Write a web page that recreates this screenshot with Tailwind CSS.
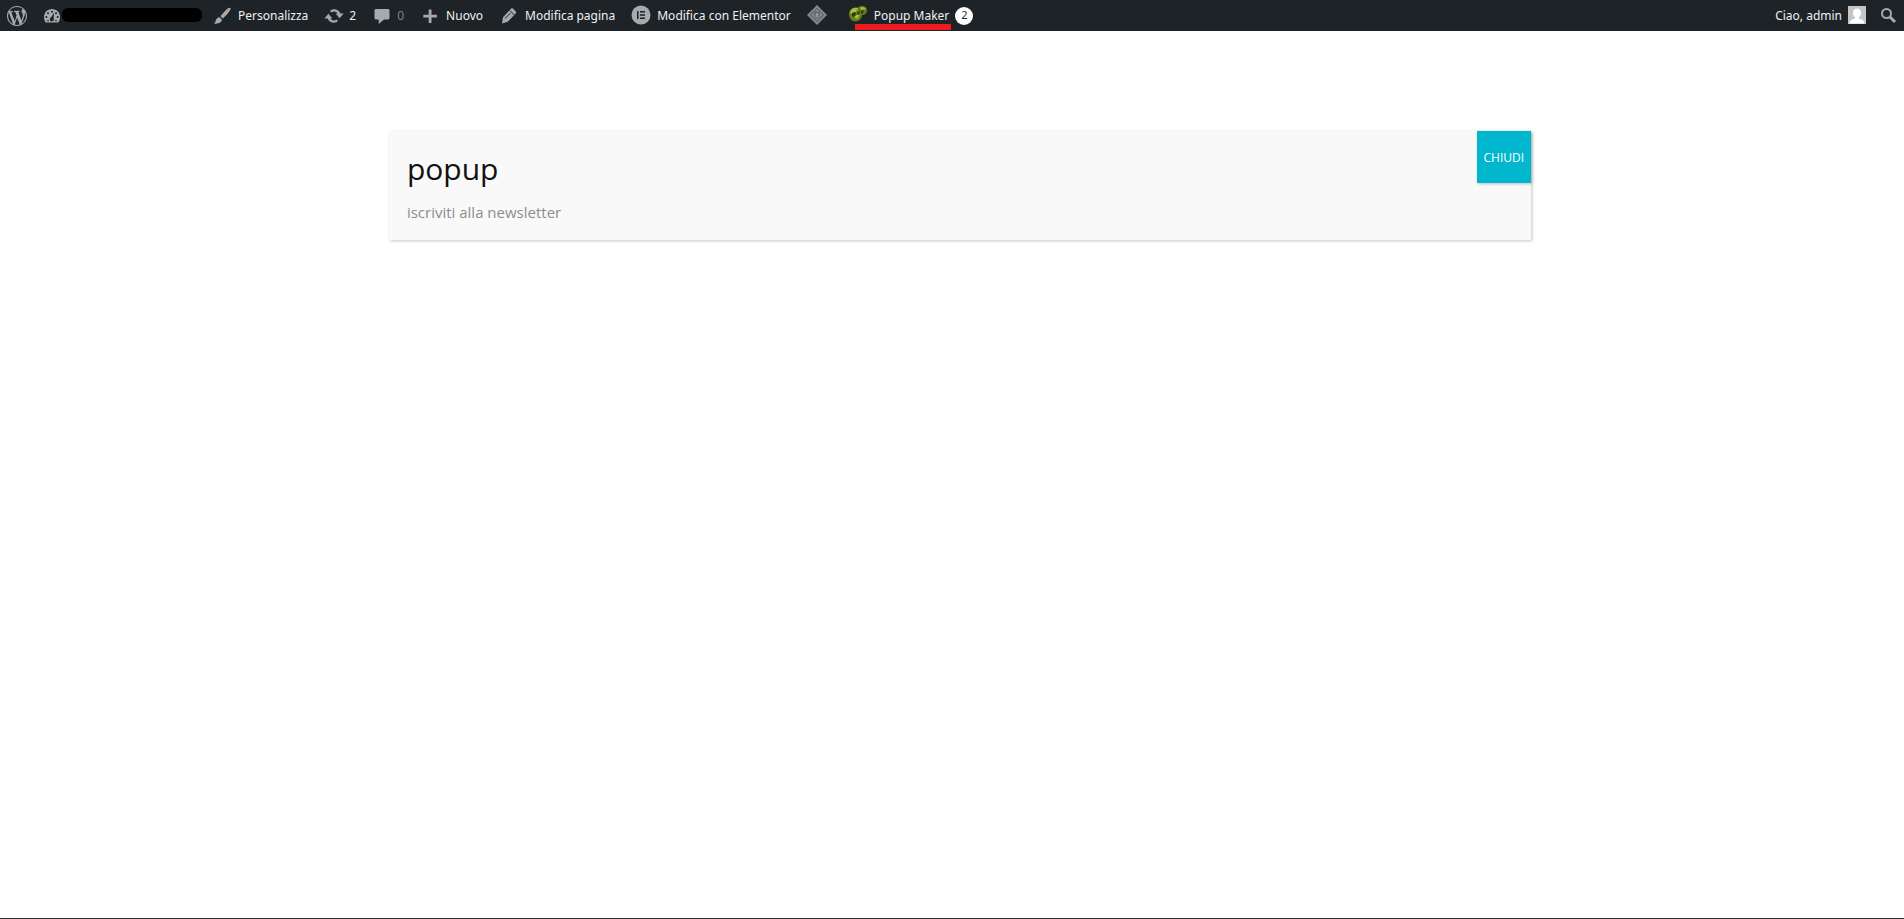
<!DOCTYPE html>
<html lang="it">
<head>
  <meta charset="UTF-8" />
  <meta name="viewport" content="width=device-width, initial-scale=1.0"/>
  <title>popup</title>
  <script src="https://cdn.jsdelivr.net/npm/@tailwindcss/browser@4"></script>
</head>
<body class="bg-white min-h-screen flex flex-col font-['Open_Sans','Noto_Sans',sans-serif]">
  <!-- Admin bar -->
  <nav class="h-[31px] bg-[#1d2327] text-[#f0f0f1] text-xs font-['Noto_Sans','Open_Sans',sans-serif] flex items-center justify-between whitespace-nowrap">
    <div class="h-full flex items-center">
      <a href="#" aria-label="WordPress" class="flex items-center px-[7px]">
        <svg class="w-5 h-5 fill-[#a7aaad]" viewBox="0 0 20 20"><path d="M20 10c0-5.51-4.49-10-10-10C4.48 0 0 4.49 0 10c0 5.52 4.48 10 10 10 5.51 0 10-4.48 10-10zM7.78 15.37L4.37 6.22c.55-.02 1.17-.08 1.17-.08.5-.06.44-1.13-.06-1.11 0 0-1.45.11-2.37.11-.18 0-.37 0-.58-.01C4.12 2.69 6.87 1.11 10 1.11c2.33 0 4.45.87 6.05 2.34-.68-.11-1.65.39-1.65 1.58 0 .74.45 1.36.9 2.1.35.61.55 1.36.55 2.46 0 1.49-1.4 5-1.4 5l-3.03-8.37c.54-.02.82-.17.82-.17.5-.05.44-1.25-.06-1.22 0 0-1.44.12-2.38.12-.87 0-2.33-.12-2.33-.12-.5-.03-.56 1.2-.06 1.22l.92.08 1.26 3.41zM17.41 10c.24-.64.74-1.87.43-4.25.7 1.29 1.05 2.71 1.05 4.25 0 3.29-1.73 6.24-4.4 7.78.97-2.59 1.94-5.2 2.92-7.78zM6.1 18.09C3.12 16.65 1.11 13.53 1.11 10c0-1.3.23-2.48.72-3.59C3.25 10.3 4.67 14.2 6.1 18.09zm4.03-6.63l2.58 6.98c-.86.29-1.76.45-2.71.45-.79 0-1.57-.11-2.29-.33.81-2.38 1.62-4.74 2.42-7.1z"/></svg>
      </a>
      <a href="#" aria-label="Sito" class="flex items-center pl-2 pr-[2px]">
        <svg class="w-5 h-5" viewBox="0 0 20 20">
          <path class="fill-[#a7aaad]" d="M3.8 16.5h12.4C17.500 15 18 13 18 11c0-4.400-3.600-8-8-8s-8 3.600-8 8c0 2 .5 4 1.800 5.500z"/>
          <g class="fill-[#1d2327]"><circle cx="10" cy="5.700" r="1"/><circle cx="6" cy="7.300" r="1"/><circle cx="14" cy="7.300" r="1"/><circle cx="4.400" cy="11" r="1"/><circle cx="15.600" cy="11" r="1"/><path d="M12.200 6.800l-.6 5.200a2.100 2.100 0 1 1-2.500-.7z"/><path d="M5 14.200h2v1H5zM13 14.200h2v1h-2z"/></g>
        </svg>
        <span class="w-[140px] h-[14px] -mt-px rounded-md bg-black"></span>
      </a>
      <a href="#" class="flex items-center gap-[6px] px-2">
        <svg class="w-5 h-5 fill-[#a7aaad]" viewBox="0 0 20 20"><path d="M18.300 2c-.7-.5-1.700-.1-2.600.6-2.600 2.200-5.200 5-7.200 7.600l2.400 2.400c2.700-2.500 5.500-5.600 7.300-8.500.5-.8.6-1.700.1-2.100zM7.600 11.200l2.200 2.200c.1 1.600-.8 2.700-2.300 3.400-1.800.9-4 1-5.900.8 1.200-.6 1.700-1.500 2.100-2.900.5-1.900 1.900-3.300 3.900-3.500z"/></svg>
        <span>Personalizza</span>
      </a>
      <a href="#" class="flex items-center gap-[5px] px-2">
        <svg class="w-5 h-5 fill-[#a7aaad]" viewBox="0 0 20 20"><path d="M10.200 3.300c2.800 0 5.200 1.700 6.200 4.200H19.600l-4 4.700-4-4.700h2.100c-.7-1.200-2-2-3.500-2-1 0-2 .4-2.700 1L6 4.900c1.100-1 2.600-1.600 4.200-1.600zM9.800 16.700c-2.800 0-5.200-1.700-6.200-4.200H.4l4-4.700 4 4.700H6.300c.7 1.200 2 2 3.500 2 1 0 2-.4 2.700-1l1.500 1.600c-1.100 1-2.600 1.600-4.200 1.600z"/></svg>
        <span>2</span>
      </a>
      <a href="#" class="flex items-center gap-[5px] px-2">
        <svg class="w-5 h-5 fill-[#a7aaad]" viewBox="0 0 20 20"><path d="M4 3h12c.8 0 1.500.7 1.500 1.500v7.500c0 .8-.7 1.500-1.500 1.500h-4L6.700 18v-4.500H4c-.8 0-1.500-.7-1.500-1.500V4.500C2.500 3.700 3.200 3 4 3z"/></svg>
        <span class="text-[#7e8286]">0</span>
      </a>
      <a href="#" class="flex items-center gap-[6px] px-2">
        <svg class="w-5 h-5 fill-[#a7aaad]" viewBox="0 0 20 20"><path d="M8.700 3.500h2.800v5.300h5.400v2.700h-5.400v5.400H8.700v-5.400H3.300V8.800h5.400z"/></svg>
        <span>Nuovo</span>
      </a>
      <a href="#" class="flex items-center gap-[6px] px-2">
        <svg class="w-5 h-5" viewBox="0 0 20 20"><path class="fill-[#a7aaad]" d="M12 2.800c.6-.6 1.500-.6 2.100 0l2.600 2.600c.6.6.6 1.500 0 2.100l-8 8.200L3 17.500l1-6.200z"/><path class="fill-none stroke-[#1d2327]" d="M10.800 4.500l4.500 4.500M6 12.500l5.500-5.500"/></svg>
        <span>Modifica pagina</span>
      </a>
      <a href="#" class="flex items-center gap-[6px] px-2">
        <svg class="w-5 h-5 -mt-px" viewBox="0 0 20 20"><circle class="fill-[#a7aaad]" cx="10" cy="10" r="9.500"/><path class="fill-[#1d2327]" d="M6 6h1.500v8H6zM9 6h5v1.400H9zM9 9.300h5v1.400H9zM9 12.600h5V14H9z"/></svg>
        <span>Modifica con Elementor</span>
      </a>
      <a href="#" aria-label="Strumenti" class="flex items-center px-2">
        <svg class="w-5 h-5 -mt-px" viewBox="0 0 20 20"><path class="fill-[#85888b]" d="M10 0l10 10-10 10L0 10z"/><path class="fill-none stroke-[#4c5257]" d="M10 3.500l6.500 6.500-6.500 6.500L3.500 10z"/><path class="fill-[#96999c] stroke-[#4c5257]" d="M8 7.500h4v4L10 13.500 8 11.500z"/></svg>
      </a>
      <a href="#" class="relative h-full flex items-center gap-[6px] pl-[13px] pr-2">
        <svg class="w-5 h-5 -mt-1" viewBox="0 0 20 20"><ellipse class="fill-[#64801a]" cx="7.500" cy="10.500" rx="6.500" ry="7"/><ellipse class="fill-[#64801a]" cx="14" cy="6.500" rx="5" ry="4.500"/><path class="fill-[#a3be3c]" d="M2 8c1-4 5-5 8-4L8 8l-5 2zM12 4c2-2 5-1 6 1l-4 1zM6 13l4-3 2 1-3 4z"/><path class="fill-[#2c3a10]" d="M4 9l3-1 1 2-2 3-2-1zM13 7l3-1-1 3-2 1zM10 8l2-1-1 4-2-1z"/></svg>
        <span>Popup Maker</span>
        <span class="w-[18px] h-[18px] rounded-full bg-white text-[#1d2327] text-[11px] flex items-center justify-center">2</span>
        <span class="absolute bottom-px left-5 right-[30px] h-[6px] bg-[#ed1c1f]"></span>
      </a>
    </div>
    <div class="flex items-center">
      <a href="#" class="flex items-center gap-[6px] px-[6px]">
        <span>Ciao, admin</span>
        <svg class="w-[18px] h-[18px] -mt-px" viewBox="0 0 18 18"><path class="fill-[#c3c5c8]" d="M0 0h18v18H0z"/><path class="fill-white" d="M9 2.500c2.500 0 4 1.700 4 4.200 0 2-.8 3.600-2 4.500v1.300c3 .7 5 1.800 5.500 5H1.500c.5-3.200 2.500-4.300 5.500-5v-1.300c-1.200-.9-2-2.500-2-4.500 0-2.500 1.500-4.200 4-4.200z"/></svg>
      </a>
      <a href="#" aria-label="Cerca" class="flex items-center px-[6px]">
        <svg class="w-5 h-5" viewBox="0 0 20 20"><circle class="fill-none stroke-[#a7aaad] stroke-2" cx="8.500" cy="7.500" r="4.500"/><path class="stroke-[#a7aaad] stroke-3" d="M12 11l5 5"/></svg>
      </a>
    </div>
  </nav>

  <!-- Popup -->
  <main class="flex-1 pt-[100px] pl-4">
    <section class="relative w-[60.5%] mx-auto bg-[#f9f9f9] px-[18px] pt-[15px] pb-[17px] shadow-[1px_1px_3px_rgba(2,2,2,0.23)]">
      <h1 class="text-3xl leading-[46px] text-[#111111]">popup</h1>
      <p class="mt-[9px] text-[15px] leading-[22px] text-[#8d8d8d]">iscriviti alla newsletter</p>
      <button type="button" class="absolute top-0 right-0 px-[7px] pt-[2px] h-[52px] bg-[#00b7cd] text-white text-xs shadow-[1px_1px_3px_rgba(2,2,2,0.23)]">CHIUDI</button>
    </section>
  </main>

  <footer class="h-[6px] bg-[#fefefa] border-b border-[#2b2b2b]"></footer>
</body>
</html>
